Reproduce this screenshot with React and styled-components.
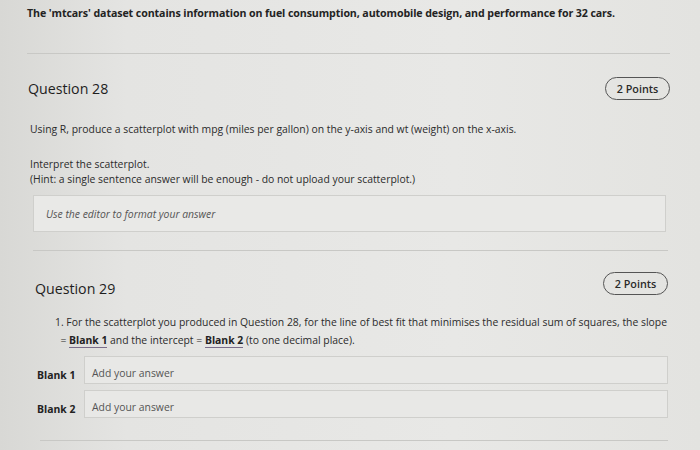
import React from "react";
import styled, { createGlobalStyle } from "styled-components";

const Global = createGlobalStyle`
  html, body { margin: 0; padding: 0; }
  body {
    width: 700px; height: 450px; overflow: hidden;
    background: linear-gradient(90deg, #d8d8d5 0%, #e4e4e2 18%, #e8e8e6 65%, #e3e3e0 100%);
    font-family: "Open Sans", "Noto Sans", sans-serif;
    color: #232323;
  }
`;

const Page = styled.div`
  padding: 6px 30px 0 27px;
  display: flex;
  flex-direction: column;
`;

const Intro = styled.div`
  font-weight: 700;
  font-size: 10.65px;
  letter-spacing: -0.1px;
  line-height: 14px;
  padding-bottom: 33px;
`;

const Rule = styled.div`
  height: 1px;
  background: #c8c8c5;
  margin-left: ${p => p.$l || 0}px;
  margin-right: ${p => p.$r || 0}px;
  margin-top: ${p => p.$t || 0}px;
`;

const Head = styled.div`
  display: flex;
  justify-content: space-between;
  align-items: ${p => p.$align || "center"};
  padding: ${p => p.$pad};
`;

const QTitle = styled.div`
  font-size: 14.2px;
  font-weight: 400;
  color: #1e1e1e;
  margin-left: ${p => p.$l || 0}px;
  margin-top: ${p => p.$t || 0}px;
`;

const Badge = styled.div`
  border: 1px solid #555;
  border-radius: 12px;
  height: 23px;
  width: 65px;
  box-sizing: border-box;
  display: flex;
  align-items: center;
  justify-content: center;
  font-size: 10.8px;
  font-weight: 600;
  color: #2a2a2a;
`;

const Para = styled.div`
  font-size: 10.4px;
  line-height: ${p => p.$lh || 15}px;
  color: #2b2b2b;
  margin-left: ${p => p.$l || 0}px;
  margin-top: ${p => p.$t || 0}px;
`;

const EditorBox = styled.div`
  margin: 8px 4px 18px 6px;
  height: 37px;
  box-sizing: border-box;
  border: 1px solid #cfcfcc;
  background: #e9e9e7;
  display: flex;
  align-items: center;
  padding-left: 12px;
  font-style: italic;
  font-size: 10.4px;
  color: #555;
`;

const Blank = styled.strong`
  font-weight: 700;
  color: #222;
  border-bottom: 1.5px solid #7a6d8a;
`;

const BlankRow = styled.div`
  display: flex;
  align-items: center;
  margin: ${p => p.$m};
`;

const BlankLabel = styled.div`
  width: 47px;
  padding: 9px 0 0 10px;
  font-size: 10.4px;
  font-weight: 700;
  color: #222;
`;

const Input = styled.div`
  flex: 1;
  height: 28px;
  box-sizing: border-box;
  margin-right: 2px;
  border: 1px solid #cfcfcc;
  background: #e8e8e6;
  display: flex;
  align-items: center;
  padding: 5px 0 0 7px;
  font-size: 10.4px;
  color: #555;
`;

export default function App() {
  return (
    <>
      <Global />
      <Page>
        <Intro>
          The 'mtcars' dataset contains information on fuel consumption, automobile design, and performance for 32 cars.
        </Intro>
        <Rule />
        <Head $pad="23px 0 0 0">
          <QTitle $l={1}>Question 28</QTitle>
          <Badge>2 Points</Badge>
        </Head>
        <Para $l={3} $t={22}>
          Using R, produce a scatterplot with mpg (miles per gallon) on the y-axis and wt (weight) on the x-axis.
        </Para>
        <Para $l={3} $t={20}>
          Interpret the scatterplot.
          <br />
          (Hint: a single sentence answer will be enough - do not upload your scatterplot.)
        </Para>
        <EditorBox>Use the editor to format your answer</EditorBox>
        <Rule $l={6} $r={2} />
        <Head $pad="21px 2px 0 8px" $align="flex-start">
          <QTitle $t={7}>Question 29</QTitle>
          <Badge>2 Points</Badge>
        </Head>
        <Para $l={28} $t={15} $lh={18}>
          1. For the scatterplot you produced in Question 28, for the line of best fit that minimises the residual sum of squares, the slope
          <br />
          &nbsp;&nbsp;= <Blank>Blank 1</Blank> and the intercept = <Blank>Blank 2</Blank> (to one decimal place).
        </Para>
        <BlankRow $m="7px 0 0 0">
          <BlankLabel>Blank 1</BlankLabel>
          <Input>Add your answer</Input>
        </BlankRow>
        <BlankRow $m="6px 0 0 0">
          <BlankLabel>Blank 2</BlankLabel>
          <Input>Add your answer</Input>
        </BlankRow>
        <Rule $l={13} $r={2} $t={22} />
      </Page>
    </>
  );
}
